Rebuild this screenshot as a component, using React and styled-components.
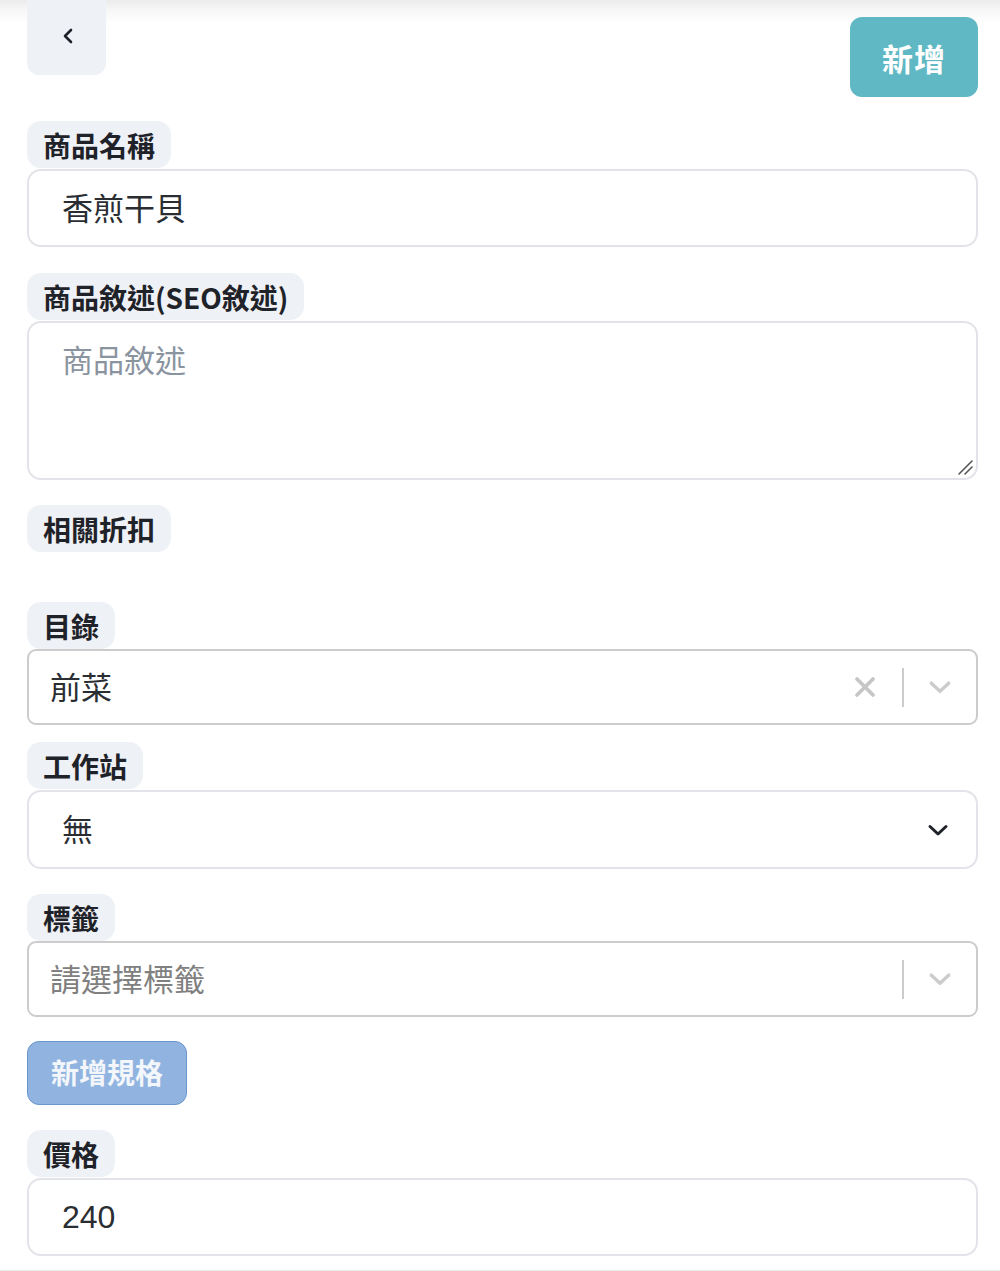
import React from 'react';
import styled, { createGlobalStyle } from 'styled-components';

const Global = createGlobalStyle`
  * { box-sizing: border-box; }
  body {
    margin: 0;
    background: linear-gradient(#ebebeb 0, #f7f7f7 10px, #fff 24px);
    font-family: "Noto Sans CJK TC", "Noto Sans", sans-serif;
    color: #1f2329;
  }
`;

const Page = styled.div`
  padding: 0 22px 14px 27px;
  display: flex;
  flex-direction: column;
`;

const Header = styled.div`
  display: flex;
  justify-content: space-between;
  align-items: flex-start;
  height: 121px;
`;

const BackButton = styled.button`
  width: 79px;
  height: 75px;
  border: none;
  border-radius: 0 0 12px 12px;
  background: #eef1f5;
  display: flex;
  align-items: flex-start;
  justify-content: center;
  padding-top: 27px;
  padding-right: 4px;
`;

const SubmitButton = styled.button`
  margin-top: 17px;
  width: 128px;
  height: 80px;
  border: none;
  border-radius: 12px;
  background: #5fb8c3;
  color: #fff;
  font-family: inherit;
  font-size: 31px;
  font-weight: 700;
  letter-spacing: 1px;
`;

const Group = styled.div`
  display: flex;
  flex-direction: column;
  align-items: flex-start;
  margin-bottom: ${(p) => p.gap ?? 26}px;
`;

const Label = styled.div`
  height: 47px;
  padding: 0 16px;
  display: flex;
  align-items: center;
  background: #eef1f5;
  border-radius: 14px;
  font-size: 28px;
  font-weight: 700;
  color: #1f2329;
  line-height: 1;
`;

const Input = styled.div`
  align-self: stretch;
  height: 78px;
  margin-top: 1px;
  border: 2px solid #e2e4ea;
  border-radius: 14px;
  background: #fff;
  display: flex;
  align-items: center;
  padding-left: 33px;
  padding-bottom: ${(p) => (p.num ? 0 : 3)}px;
  font-size: ${(p) => (p.num ? 32 : 31)}px;
  color: #2a2e33;
  font-family: ${(p) => (p.num ? '"Liberation Sans", "Noto Sans", sans-serif' : 'inherit')};
`;

const TextArea = styled.div`
  align-self: stretch;
  position: relative;
  height: 159px;
  margin-top: 1px;
  border: 2px solid #e2e4ea;
  border-radius: 14px;
  background: #fff;
  padding: 13px 0 0 33px;
  font-size: 31px;
  color: #8a949f;
`;

const Resize = styled.svg`
  position: absolute;
  right: 2px;
  bottom: 2px;
`;

const Discounts = styled.div`
  height: 23px;
`;

const Select = styled.div`
  align-self: stretch;
  height: ${(p) => (p.native ? 79 : 76)}px;
  margin-top: ${(p) => (p.native ? 1 : 0)}px;
  border: 2px solid ${(p) => (p.native ? '#e2e4ea' : '#cccccc')};
  border-radius: ${(p) => (p.native ? 14 : 9)}px;
  background: #fff;
  display: flex;
  align-items: center;
  padding-left: ${(p) => (p.native ? 33 : 21)}px;
  font-size: 31px;
  color: ${(p) => (p.placeholder ? '#808080' : '#2a2e33')};
`;

const Value = styled.div`
  flex: 1;
  padding-bottom: 4px;
`;

const Indicators = styled.div`
  display: flex;
  align-items: center;
  height: 100%;
`;

const IconBox = styled.div`
  width: ${(p) => p.w || 37}px;
  display: flex;
  justify-content: center;
  align-items: center;
`;

const Separator = styled.span`
  width: 2px;
  height: 39px;
  background: #cccccc;
`;

const SpecButton = styled.button`
  width: 160px;
  height: 64px;
  border: 1px solid #6b96cc;
  border-radius: 12px;
  background: #90b4df;
  color: #f3f6fb;
  font-family: inherit;
  font-size: 28px;
  font-weight: 700;
  padding-bottom: 3px;
`;

const Chevron = ({ color = '#cccccc', size = 26, w = 3.2 }) => (
  <svg width={size} height={size} viewBox="0 0 24 24" fill="none" stroke={color} strokeWidth={w} strokeLinecap="round" strokeLinejoin="round">
    <polyline points="4,8.5 12,16 20,8.5" />
  </svg>
);

const Cross = () => (
  <svg width="24" height="24" viewBox="0 0 24 24" fill="none" stroke="#c6c6c6" strokeWidth="3.8" strokeLinecap="round">
    <line x1="4" y1="4" x2="20" y2="20" />
    <line x1="20" y1="4" x2="4" y2="20" />
  </svg>
);

export default function App() {
  return (
    <>
      <Global />
      <Page>
        <Header>
          <BackButton>
            <svg width="12" height="18" viewBox="0 0 12 18" fill="none" stroke="#1f2329" strokeWidth="2.6" strokeLinecap="round" strokeLinejoin="round">
              <polyline points="9,3 3,9 9,15" />
            </svg>
          </BackButton>
          <SubmitButton>新增</SubmitButton>
        </Header>

        <Group>
          <Label>商品名稱</Label>
          <Input>香煎干貝</Input>
        </Group>

        <Group gap={25}>
          <Label>商品敘述(SEO敘述)</Label>
          <TextArea>
            商品敘述
            <Resize width="18" height="18" viewBox="0 0 18 18" stroke="#555" strokeWidth="1.6" strokeLinecap="round">
              <line x1="3" y1="16" x2="16" y2="3" />
              <line x1="9" y1="16" x2="16" y2="9" />
            </Resize>
          </TextArea>
        </Group>

        <Group gap={27}>
          <Label>相關折扣</Label>
          <Discounts />
        </Group>

        <Group gap={17}>
          <Label>目錄</Label>
          <Select>
            <Value>前菜</Value>
            <Indicators>
              <IconBox w={74}><Cross /></IconBox>
              <Separator />
              <IconBox w={72}><Chevron /></IconBox>
            </Indicators>
          </Select>
        </Group>

        <Group gap={25}>
          <Label>工作站</Label>
          <Select native>
            <Value>無</Value>
            <IconBox w={77}><Chevron color="#1f2329" size={24} w={3} /></IconBox>
          </Select>
        </Group>

        <Group gap={24}>
          <Label>標籤</Label>
          <Select placeholder>
            <Value>請選擇標籤</Value>
            <Indicators>
              <Separator />
              <IconBox w={72}><Chevron /></IconBox>
            </Indicators>
          </Select>
        </Group>

        <Group gap={25}>
          <SpecButton>新增規格</SpecButton>
        </Group>

        <Group gap={0}>
          <Label>價格</Label>
          <Input num>240</Input>
        </Group>
      </Page>
    </>
  );
}
